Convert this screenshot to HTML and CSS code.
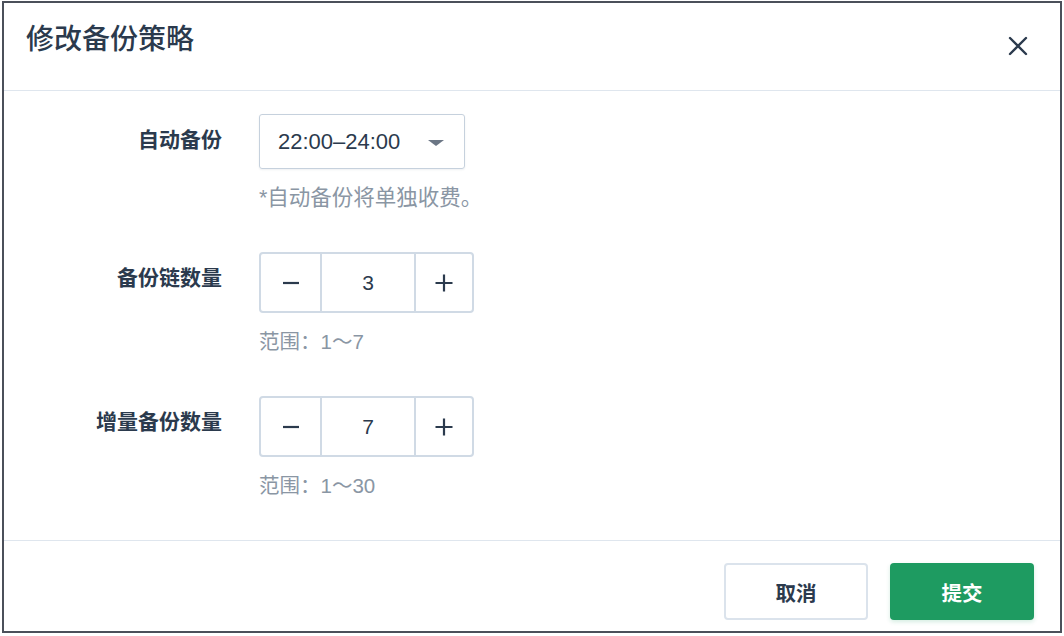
FILE: index.html
```
<!DOCTYPE html>
<html lang="zh-CN">
<head>
<meta charset="utf-8">
<title>修改备份策略</title>
<link rel="stylesheet" href="styles.css">
</head>
<body>
<div class="dialog">
  <div class="dialog-header">
    <h1 class="dialog-title">修改备份策略</h1>
    <button class="close-btn" aria-label="关闭">
      <svg width="20" height="20" viewBox="0 0 20 20"><path d="M2 2 L18 18 M18 2 L2 18" stroke="#2b3a4d" stroke-width="2.4" stroke-linecap="round" fill="none"/></svg>
    </button>
  </div>
  <div class="dialog-body">
    <div class="form-row">
      <div class="form-label">自动备份</div>
      <div class="form-control">
        <div class="select">
          <span class="select-value">22:00–24:00</span>
          <span class="caret"></span>
        </div>
        <div class="hint">*自动备份将单独收费。</div>
      </div>
    </div>
    <div class="form-row">
      <div class="form-label">备份链数量</div>
      <div class="form-control">
        <div class="stepper">
          <span class="step-btn"><svg width="18" height="18" viewBox="0 0 18 18"><path d="M1 9 H17" stroke="#2b3a4d" stroke-width="2.2" fill="none"/></svg></span>
          <span class="step-value">3</span>
          <span class="step-btn plus"><svg width="18" height="18" viewBox="0 0 18 18"><path d="M0.5 9 H17.5 M9 0.5 V17.5" stroke="#2b3a4d" stroke-width="2.2" fill="none"/></svg></span>
        </div>
        <div class="hint range">范围：1～7</div>
      </div>
    </div>
    <div class="form-row">
      <div class="form-label">增量备份数量</div>
      <div class="form-control">
        <div class="stepper">
          <span class="step-btn"><svg width="18" height="18" viewBox="0 0 18 18"><path d="M1 9 H17" stroke="#2b3a4d" stroke-width="2.2" fill="none"/></svg></span>
          <span class="step-value">7</span>
          <span class="step-btn plus"><svg width="18" height="18" viewBox="0 0 18 18"><path d="M0.5 9 H17.5 M9 0.5 V17.5" stroke="#2b3a4d" stroke-width="2.2" fill="none"/></svg></span>
        </div>
        <div class="hint range">范围：1～30</div>
      </div>
    </div>
  </div>
  <div class="dialog-footer">
    <button class="btn btn-default">取消</button>
    <button class="btn btn-primary">提交</button>
  </div>
</div>
</body>
</html>
```

FILE: styles.css
```
* { box-sizing: border-box; }
html, body { margin: 0; padding: 0; background: #ffffff; }
body {
  font-family: "Liberation Sans", "Noto Sans CJK SC", sans-serif;
  color: #2b3a4d;
}
.dialog {
  margin: 1px 2px 0 2px;
  width: 1060px;
  height: 632px;
  border: 2px solid #4b505a;
  background: #fff;
  display: flex;
  flex-direction: column;
}
.dialog-header {
  height: 88px;
  flex: none;
  border-bottom: 1px solid #dfe6ee;
  display: flex;
  justify-content: space-between;
  align-items: flex-start;
  padding: 0 32px 0 22px;
}
.dialog-title {
  margin: 0;
  padding-top: 17px;
  font-size: 28px;
  line-height: 40px;
  font-weight: 500;
  color: #2b3a4d;
}
.close-btn {
  margin-top: 33px;
  padding: 0;
  border: 0;
  background: none;
  width: 20px;
  height: 20px;
  display: flex;
}
.dialog-body {
  padding-top: 23px;
  flex: none;
}
.form-row {
  display: grid;
  grid-template-columns: 218px auto;
  column-gap: 37px;
  margin-bottom: 40px;
}
.form-label {
  text-align: right;
  font-size: 21px;
  font-weight: 700;
  line-height: 28px;
  padding-top: 12px;
  color: #2b3a4d;
}
.form-control {
  display: flex;
  flex-direction: column;
  align-items: flex-start;
}
.select {
  width: 206px;
  height: 55px;
  border: 1px solid #c6d1dd;
  border-radius: 3px;
  box-shadow: 0 1px 2px rgba(40, 60, 90, 0.08);
  display: flex;
  align-items: center;
  justify-content: space-between;
  padding: 0 20px 0 18px;
}
.select-value {
  font-size: 22px;
  color: #2b3a4d;
}
.caret {
  width: 0;
  height: 0;
  border-left: 8px solid transparent;
  border-right: 8px solid transparent;
  border-top: 6px solid #6b7685;
  margin-top: 2px;
}
.hint {
  margin-top: 15px;
  font-size: 21.5px;
  line-height: 28px;
  color: #8a96a4;
}
.hint.range {
  font-size: 20.5px;
}
.stepper {
  width: 215px;
  height: 61px;
  border: 2px solid #d0dae5;
  border-radius: 4px;
  display: flex;
}
.step-btn {
  width: 59px;
  display: flex;
  align-items: center;
  justify-content: center;
}
.step-btn.plus { width: 56px; }
.step-value {
  flex: 1;
  border-left: 2px solid #d0dae5;
  border-right: 2px solid #d0dae5;
  display: flex;
  align-items: center;
  justify-content: center;
  font-size: 21px;
  color: #2b3a4d;
}
.dialog-footer {
  flex: 1;
  border-top: 1px solid #dfe6ee;
  padding: 22px 26px 0 0;
  display: flex;
  justify-content: flex-end;
  align-items: flex-start;
  gap: 22px;
}
.btn {
  width: 144px;
  height: 57px;
  border-radius: 4px;
  font-family: "Liberation Sans", "Noto Sans CJK SC", sans-serif;
  font-size: 20.5px;
  font-weight: 700;
  padding: 0;
}
.btn-default {
  background: #fff;
  border: 2px solid #dbe3ec;
  color: #2b3a4d;
}
.btn-primary {
  background: #1e9b61;
  border: 0;
  color: #fff;
  box-shadow: 0 2px 4px rgba(30, 155, 97, 0.18);
}
```
